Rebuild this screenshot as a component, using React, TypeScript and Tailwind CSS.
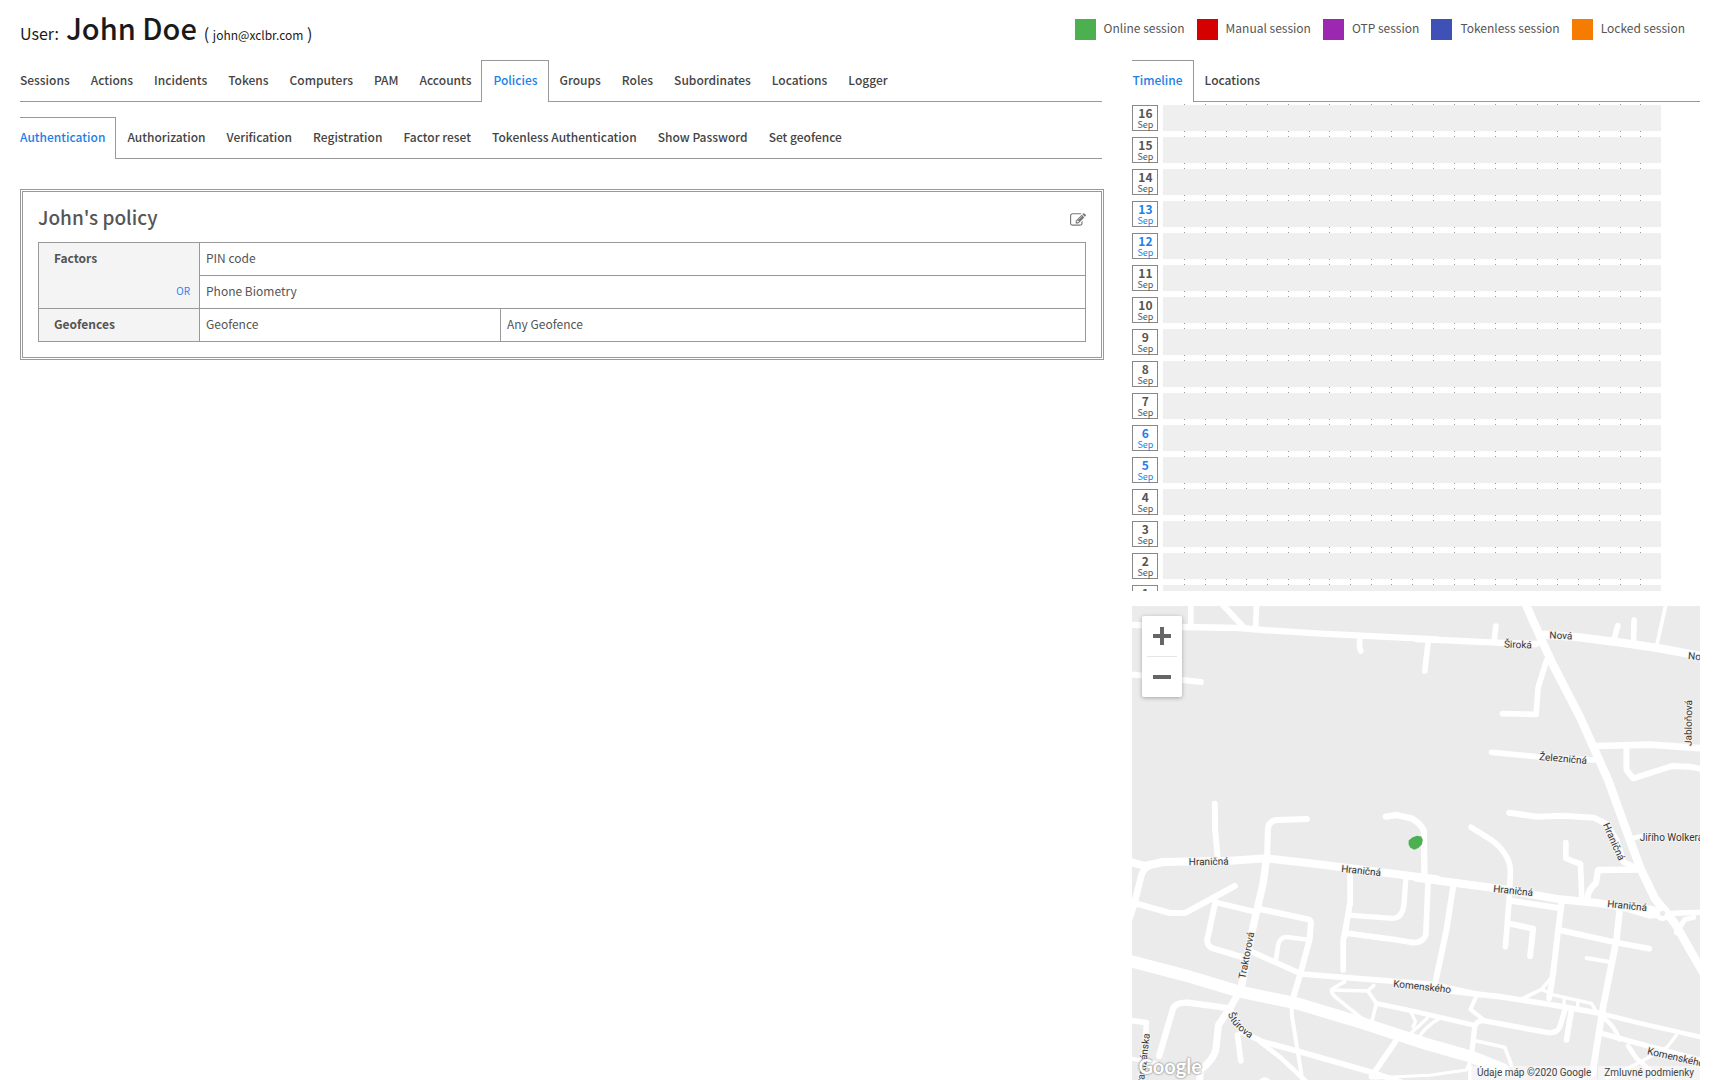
import React, { useState } from "react";

const legend = [
  { label: "Online session", color: "bg-[#4caf50]" },
  { label: "Manual session", color: "bg-[#d50000]" },
  { label: "OTP session", color: "bg-[#9c27b0]" },
  { label: "Tokenless session", color: "bg-[#3f51b5]" },
  { label: "Locked session", color: "bg-[#f57c00]" },
];

const mainTabs = [
  "Sessions", "Actions", "Incidents", "Tokens", "Computers", "PAM", "Accounts",
  "Policies", "Groups", "Roles", "Subordinates", "Locations", "Logger",
];

const policyTabs = [
  "Authentication", "Authorization", "Verification", "Registration",
  "Factor reset", "Tokenless Authentication", "Show Password", "Set geofence",
];

const days = Array.from({ length: 16 }, (_, i) => 16 - i);
const weekend = [13, 12, 6, 5];
const hours = Array.from({ length: 24 }, (_, i) => i);

function Tabs({ items, initial, label }: { items: string[]; initial: string; label: string }) {
  const [active, setActive] = useState(initial);
  return (
    <div role="tablist" aria-label={label} className="flex h-[42px] text-[12px] leading-5 font-medium">
      {items.map((item, i) => (
        <button
          key={item}
          type="button"
          role="tab"
          aria-selected={item === active}
          onClick={() => setActive(item)}
          className={
            "whitespace-nowrap border-[#999] pr-[10px] " +
            (i === 0 ? "pl-0 " : "pl-[11px] ") +
            (item === active
              ? "border-t border-r pb-[3px] text-[#1e7fe6] " + (i === 0 ? "" : "border-l")
              : "border-b border-t border-t-transparent pb-0.5 text-[#444]")
          }
        >
          {item}
        </button>
      ))}
      <div className="grow border-b border-[#999]" />
    </div>
  );
}

function HourTicks({ edge }: { edge: "top" | "full" }) {
  return (
    <div className={"grid grid-cols-24 " + (edge === "full" ? "h-1.5" : "h-px")}>
      {hours.map((h) => (
        <div key={h} className="flex flex-col items-end justify-between">
          {h < 23 && <i className="-mr-px size-px bg-[#999]" />}
          {h < 23 && edge === "full" && <i className="-mr-px size-px bg-[#999]" />}
        </div>
      ))}
    </div>
  );
}

function Timeline() {
  return (
    <div className="mt-0.5 h-[487px] overflow-hidden pr-[39px]">
      <div className="pl-[31px]">
        <HourTicks edge="top" />
      </div>
      {days.map((d) => (
        <div key={d} className="flex gap-[5px]">
          <div
            className={
              "flex h-[26px] w-[26px] shrink-0 flex-col items-center border border-[#888] " +
              (weekend.includes(d) ? "text-[#1e7fe6]" : "text-[#555]")
            }
          >
            <span className="text-[12px] leading-[14px] font-bold">{d}</span>
            <span className="text-[9px] leading-[9px]">Sep</span>
          </div>
          <div className="grow">
            <div className="h-[26px] bg-[#efefef]" />
            <HourTicks edge="full" />
          </div>
        </div>
      ))}
    </div>
  );
}

type Road = [number, string];

const northWest: Road[] = [
  [19, "M-10 74L160 81L330 84L400 90L560 100L920 118"],
  [17, "M183 0V76"],
  [18, "M270 5L340 80"],
  [17, "M381 0L377 85"],
  [18, "M-10 222L213 246"],
  [17, "M690 115L689 140L693 153"],
  [17, "M895 125L885 213"],
  [18, "M255 611L256 690L264 775"],
  [18, "M531 657L440 660Q415 664 414 690L412 780"],
  [19, "M768 650L800 645L845 655Q872 670 882 692L884 835"],
];

const northEast: Road[] = [
  [19, "M-10 117L230 128L350 132"],
  [25, "M375 104L480 112L620 130L720 145L860 172"],
  [25, "M312 0L370 130L400 195L480 350L565 540L632 725L662 805L705 895L765 970L860 1135"],
  [17, "M228 78L224 115"],
  [17, "M594 77L582 120"],
  [17, "M643 60L641 130"],
  [11, "M740 5L710 140"],
  [17, "M380 182L355 262L349 343L248 341"],
  [20, "M530 438L690 434L860 446"],
  [18, "M620 440V510L640 535L757 498L810 500L860 510"],
  [17, "M215 457L350 470L520 480"],
  [18, "M268 638L350 650L430 647L522 653L560 672L590 720L610 785L655 808"],
  [17, "M154 682L215 720Q268 760 272 810L268 900L257 1040"],
  [14, "M635 715L670 708"],
];

const southWest: Road[] = [
  [24, "M0 65L45 78L100 66L300 62L410 55L560 72L920 118"],
  [20, "M-6 250L14 190L35 105Q48 70 100 66"],
  [18, "M10 188L120 219L168 218L315 138"],
  [18, "M257 185L232 300Q232 320 250 325L340 352"],
  [17, "M255 187L375 215"],
  [18, "M390 207L535 238Q545 240 543 255L539 300L512 400L488 480"],
  [22, "M410 55L400 130L370 260L335 440"],
  [17, "M365 335L515 402L640 412L900 432L1050 464"],
  [14, "M438 362L445 315Q450 292 470 291L540 300"],
  [36, "M-10 360L180 410L330 455L500 490L700 550L890 612L1030 652L1120 688"],
  [17, "M661 100V190L640 300L640 390"],
  [17, "M660 190L645 290"],
  [16, "M828 115L823 190Q818 235 790 235L665 226"],
  [17, "M895 120L888 285Q880 308 850 308L790 298L655 280"],
  [12, "M486 480V525L520 735"],
  [21, "M320 470L300 505L266 555L258 630Q250 660 212 690L208 740"],
  [19, "M88 648L130 505Q138 486 175 488L300 505"],
  [17, "M300 505L335 575L400 606L500 632L720 695L840 735"],
  [17, "M323 585L333 663"],
  [14, "M390 605L455 655L540 735"],
  [17, "M-10 540L50 548L46 620L30 740"],
  [12, "M0 655L80 670"],
  [17, "M797 605L725 710"],
  [9, "M735 715L800 710L900 706L1010 690L1025 650"],
  [11, "M645 425L607 447Q600 455 618 472L708 545"],
  [11, "M607 450L714 453L732 436"],
  [11, "M714 453L740 490L725 548"],
  [15, "M740 490L870 518L1035 556"],
  [10, "M843 515L857 545L850 560"],
  [10, "M892 535L830 592"],
  [10, "M930 535Q885 560 862 600"],
  [40, "M405 732v1"],
];

const southEast: Road[] = [
  [24, "M-10 113L240 146L420 178L540 190L620 203L690 224L728 220"],
  [16, "M620 195L700 206L728 216"],
  [18, "M100 140L80 270L46 430"],
  [17, "M438 8V55L482 72L486 175"],
  [19, "M655 89L535 90L528 130Q508 145 503 172"],
  [18, "M272 182L422 205"],
  [18, "M265 250L340 266L331 348"],
  [18, "M427 180L415 270L400 400L388 475"],
  [18, "M418 270L590 308L688 326"],
  [20, "M600 205L590 300L550 500L518 700"],
  [12, "M500 354L570 366"],
  [17, "M60 450L240 470L400 495L540 520"],
  [14, "M540 520L670 552L860 595"],
  [11, "M310 475L365 448L402 405"],
  [10, "M365 448L400 465L515 490L530 515"],
  [10, "M433 478V508"],
  [10, "M474 486V506"],
  [12, "M168 472L152 508L190 538"],
  [16, "M155 645L165 560Q170 542 190 542L385 578Q412 580 420 560L437 505"],
  [17, "M455 510L440 600"],
  [11, "M170 603L255 622L275 675"],
  [10, "M150 660V730"],
  [13, "M545 530Q585 555 598 598"],
  [16, "M545 580L640 606L860 665"],
  [10, "M770 585L742 622L650 672L560 715"],
  [14, "M625 618L650 655L690 690"],
  [46, "M728 219v1"],
  [17, "M728 222L780 219L860 216"],
  [15, "M770 278L795 238L822 232"],
];

function Roads({ roads, shift }: { roads: Road[]; shift: string }) {
  return (
    <g transform={shift}>
      {roads.map(([width, d]) => (
        <path key={d} d={d} strokeWidth={width} />
      ))}
    </g>
  );
}

const streets: { name: string; x: number; y: number; turn: number; start?: boolean }[] = [
  { name: "Široká", x: 386, y: 42, turn: 2 },
  { name: "Nová", x: 429, y: 33, turn: 2 },
  { name: "Nová", x: 556, y: 53, turn: 6, start: true },
  { name: "Jabloňová", x: 560, y: 117, turn: -89 },
  { name: "Železničná", x: 431, y: 156, turn: 5 },
  { name: "Hraničná", x: 479, y: 237, turn: 66 },
  { name: "Jiřího Wolkera", x: 508, y: 235, turn: 0, start: true },
  { name: "Hraničná", x: 77, y: 259, turn: -1 },
  { name: "Hraničná", x: 229, y: 268, turn: 6 },
  { name: "Hraničná", x: 381, y: 288, turn: 6 },
  { name: "Hraničná", x: 495, y: 303, turn: 6 },
  { name: "Komenského", x: 290, y: 384, turn: 6 },
  { name: "Komenského", x: 515, y: 448, turn: 13, start: true },
  { name: "Traktorová", x: 118, y: 350, turn: -79 },
  { name: "Partizánska", x: 15, y: 454, turn: -83 },
];

function Map() {
  return (
    <section aria-label="Map" className="relative mt-[15px] h-[474px] overflow-hidden bg-[#ebebeb]">
      <svg viewBox="0 0 568 474" preserveAspectRatio="xMidYMid slice" className="block size-full">
        <g transform="scale(0.33333)" fill="none" stroke="#fff" strokeLinecap="round" strokeLinejoin="round">
          <Roads roads={northWest} shift="translate(-6 -18)" />
          <Roads roads={northEast} shift="translate(864 -18)" />
          <Roads roads={southWest} shift="translate(-6 702)" />
          <Roads roads={southEast} shift="translate(864 702)" />
          <circle cx="1592" cy="922" r="8" fill="#ebebeb" stroke="none" />
        </g>
        <path
          d="M280.500 231.500L285 229.800L289.500 230.500L291 234L290 238.500L286.500 242L282.500 243.800L278.500 241.800L276.800 238.500V234.500Z"
          fill="#4caf50"
        />
        <g fill="#333" stroke="#f3f3f3" strokeWidth="2" paintOrder="stroke" className="font-['Roboto',sans-serif] text-[10px]">
          {streets.map((s) => (
            <text
              key={s.name + s.x}
              textAnchor={s.start ? "start" : "middle"}
              transform={`translate(${s.x} ${s.y}) rotate(${s.turn})`}
            >
              {s.name}
            </text>
          ))}
          <path id="sturova" d="M96 408Q101 423 124 436" fill="none" stroke="none" />
          <text>
            <textPath href="#sturova">Štúrova</textPath>
          </text>
        </g>
      </svg>
      <div className="absolute top-[10px] left-[10px] flex w-10 flex-col items-center rounded-xs bg-white shadow-[0_1px_4px_rgba(0,0,0,0.3)]">
        <button type="button" aria-label="Zoom in" className="grid size-10 place-items-center">
          <svg viewBox="0 0 18 18" className="size-[18px]" fill="#666">
            <path d="M7 0h4v7h7v4h-7v7H7v-7H0V7h7z" />
          </svg>
        </button>
        <div className="h-px w-[30px] bg-[#e6e6e6]" />
        <button type="button" aria-label="Zoom out" className="grid size-10 place-items-center">
          <svg viewBox="0 0 18 18" className="size-[18px]" fill="#666">
            <path d="M0 7h18v4H0z" />
          </svg>
        </button>
      </div>
      <a
        href="#google"
        className="absolute bottom-0 left-[6px] font-['Lato',sans-serif] text-[20px] leading-7 font-bold text-white [text-shadow:0_0_2px_#888,0_0_2px_#999]"
      >
        Google
      </a>
      <div className="absolute right-0 bottom-0 flex h-[14px] font-['Roboto',sans-serif] text-[10px] leading-[14px] text-[#444]">
        <span className="bg-white/50 px-1.5">Údaje máp ©2020 Google</span>
        <a href="#terms" className="ml-px bg-white/50 px-1.5">Zmluvné podmienky</a>
      </div>
    </section>
  );
}

export default function App() {
  return (
    <main className="min-h-screen bg-white px-5 font-['Noto_Sans_CJK_SC',sans-serif] text-[#555]">
      <header className="flex h-[60px] items-start justify-between">
        <h1 className="flex items-baseline gap-[7px] pt-[7px] leading-10 text-[#1a1a1a]">
          <span className="text-[16px]">User:</span>
          <span className="text-[29px] font-medium">John Doe</span>
          <span className="text-[16px]">
            ( <span className="text-[12px]">john@xclbr.com</span> )
          </span>
        </h1>
        <ul className="flex gap-3 pt-[19px] pr-[15px] text-[12px] leading-[17px]">
          {legend.map((l) => (
            <li key={l.label} className="flex gap-2 whitespace-nowrap">
              <span className={"size-[21px] " + l.color} />
              {l.label}
            </li>
          ))}
        </ul>
      </header>

      <div className="grid grid-cols-[656fr_344fr] gap-[30px]">
        <div className="min-w-0">
          <Tabs items={mainTabs} initial="Policies" label="User sections" />
          <div className="mt-[15px]">
            <Tabs items={policyTabs} initial="Authentication" label="Policies" />
          </div>

          <section className="mt-[30px] -mr-0.5 border-[3px] border-double border-[#999] px-[15px] pb-[15px]">
            <div className="flex h-[50px] items-center justify-between">
              <h2 className="text-[19px] leading-7 font-medium">John's policy</h2>
              <button type="button" aria-label="Edit policy" className="pt-1.5 text-[#777]">
                <svg viewBox="0 0 1792 1792" className="size-4" fill="currentColor">
                  <path d="M888 1184l116-116-152-152-116 116v56h96v96h56zm440-720q-16-16-33 1l-350 350q-17 17-1 33t33-1l350-350q17-17 1-33zm80 594v190q0 119-84.5 203.5t-203.5 84.5h-832q-119 0-203.5-84.5t-84.5-203.5v-832q0-119 84.5-203.5t203.5-84.5h832q63 0 117 25 15 7 18 23 3 17-9 29l-49 49q-14 14-32 8-23-6-45-6h-832q-66 0-113 47t-47 113v832q0 66 47 113t113 47h832q66 0 113-47t47-113v-126q0-13 9-22l64-64q15-15 35-7t20 29zm-96-738l288 288-672 672h-288v-288zm444 132l-92 92-288-288 92-92q28-28 68-28t68 28l152 152q28 28 28 68t-28 68z" />
                </svg>
              </button>
            </div>
            <table className="w-full table-fixed border-collapse text-[12px] leading-5">
              <colgroup>
                <col className="w-[161px]" />
                <col className="w-[301px]" />
                <col />
              </colgroup>
              <tbody>
                <tr className="h-[33px]">
                  <th scope="row" className="border border-b-0 border-[#999] bg-[#f4f4f4] pb-0.5 pl-[15px] text-left font-bold">
                    Factors
                  </th>
                  <td colSpan={2} className="border border-[#999] px-1.5 pb-0.5">PIN code</td>
                </tr>
                <tr className="h-[33px]">
                  <td className="border border-t-0 border-[#999] bg-[#f4f4f4] pr-[9px] pb-0.5 text-right text-[10px] text-[#2f80ed]">
                    OR
                  </td>
                  <td colSpan={2} className="border border-[#999] px-1.5 pb-0.5">Phone Biometry</td>
                </tr>
                <tr className="h-[33px]">
                  <th scope="row" className="border border-[#999] bg-[#f4f4f4] pb-0.5 pl-[15px] text-left font-bold">
                    Geofences
                  </th>
                  <td className="border border-[#999] px-1.5 pb-0.5">Geofence</td>
                  <td className="border border-[#999] px-1.5 pb-0.5">Any Geofence</td>
                </tr>
              </tbody>
            </table>
          </section>
        </div>

        <aside className="min-w-0">
          <Tabs items={["Timeline", "Locations"]} initial="Timeline" label="Activity" />
          <Timeline />
          <Map />
        </aside>
      </div>
    </main>
  );
}
